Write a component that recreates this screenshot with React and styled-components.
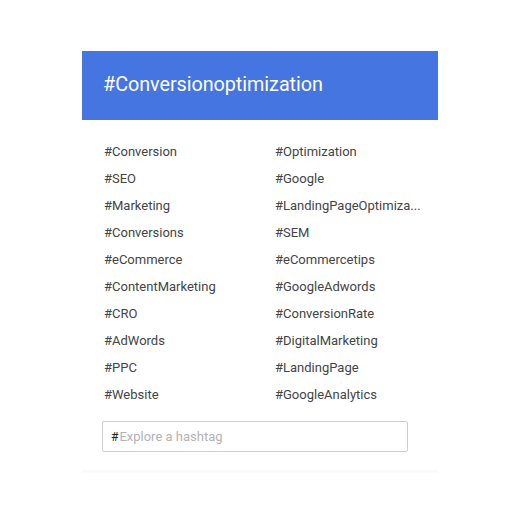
import React from 'react';
import styled, { createGlobalStyle } from 'styled-components';

const GlobalStyle = createGlobalStyle`
    html, body {
        margin: 0;
        padding: 0;
        background: #ffffff;
    }
    body {
        font-family: Roboto, "Liberation Sans", Arial, sans-serif;
    }
`;

const Page = styled.div`
    width: 520px;
    height: 520px;
    padding-top: 51px;
    box-sizing: border-box;
`;

const Card = styled.section`
    width: 356px;
    margin-left: 82px;
    background: #ffffff;
    padding-bottom: 18px;
    border-bottom: 3px solid #fbfbfb;
`;

const Header = styled.header`
    height: 69px;
    background: #4575e0;
    display: flex;
    align-items: center;
    padding-left: 21px;
    box-sizing: border-box;

    h1 {
        margin: 0;
        font-size: 19.8px;
        font-weight: 400;
        color: #ffffff;
        letter-spacing: -0.05px;
        margin-top: -2px;
    }
`;

const TagGrid = styled.ul`
    list-style: none;
    margin: 0;
    padding: 23px 0 0 22px;
    display: grid;
    grid-template-columns: 171px 150px;
    grid-auto-rows: 27px;
`;

const Tag = styled.li`
    font-size: 13px;
    color: #444444;
    white-space: nowrap;
    line-height: 17px;
`;

const SearchBox = styled.label`
    margin: 8px 0 0 20px;
    width: 306px;
    height: 31px;
    box-sizing: border-box;
    border: 1px solid #cfcfcf;
    border-radius: 2px;
    display: flex;
    align-items: center;
    padding-left: 8px;
    gap: 1px;

    span {
        font-size: 12px;
        color: #222222;
    }

    input {
        border: none;
        outline: none;
        flex: 1;
        font-family: Roboto, "Liberation Sans", Arial, sans-serif;
        font-size: 13px;
        color: #444444;
        padding: 0;
        background: transparent;
        &::placeholder {
            color: #b3b3b3;
        }
    }
`;

const tags = [
    ['#Conversion', '#Optimization'],
    ['#SEO', '#Google'],
    ['#Marketing', '#LandingPageOptimiza...'],
    ['#Conversions', '#SEM'],
    ['#eCommerce', '#eCommercetips'],
    ['#ContentMarketing', '#GoogleAdwords'],
    ['#CRO', '#ConversionRate'],
    ['#AdWords', '#DigitalMarketing'],
    ['#PPC', '#LandingPage'],
    ['#Website', '#GoogleAnalytics'],
];

function App() {
    return (
        <Page>
            <GlobalStyle />
            <Card>
                <Header>
                    <h1>#Conversionoptimization</h1>
                </Header>
                <TagGrid>
                    {tags.flat().map(tag => (
                        <Tag key={tag}>{tag}</Tag>
                    ))}
                </TagGrid>
                <SearchBox>
                    <span>#</span>
                    <input type="text" placeholder="Explore a hashtag" />
                </SearchBox>
            </Card>
        </Page>
    );
}

export default App;
